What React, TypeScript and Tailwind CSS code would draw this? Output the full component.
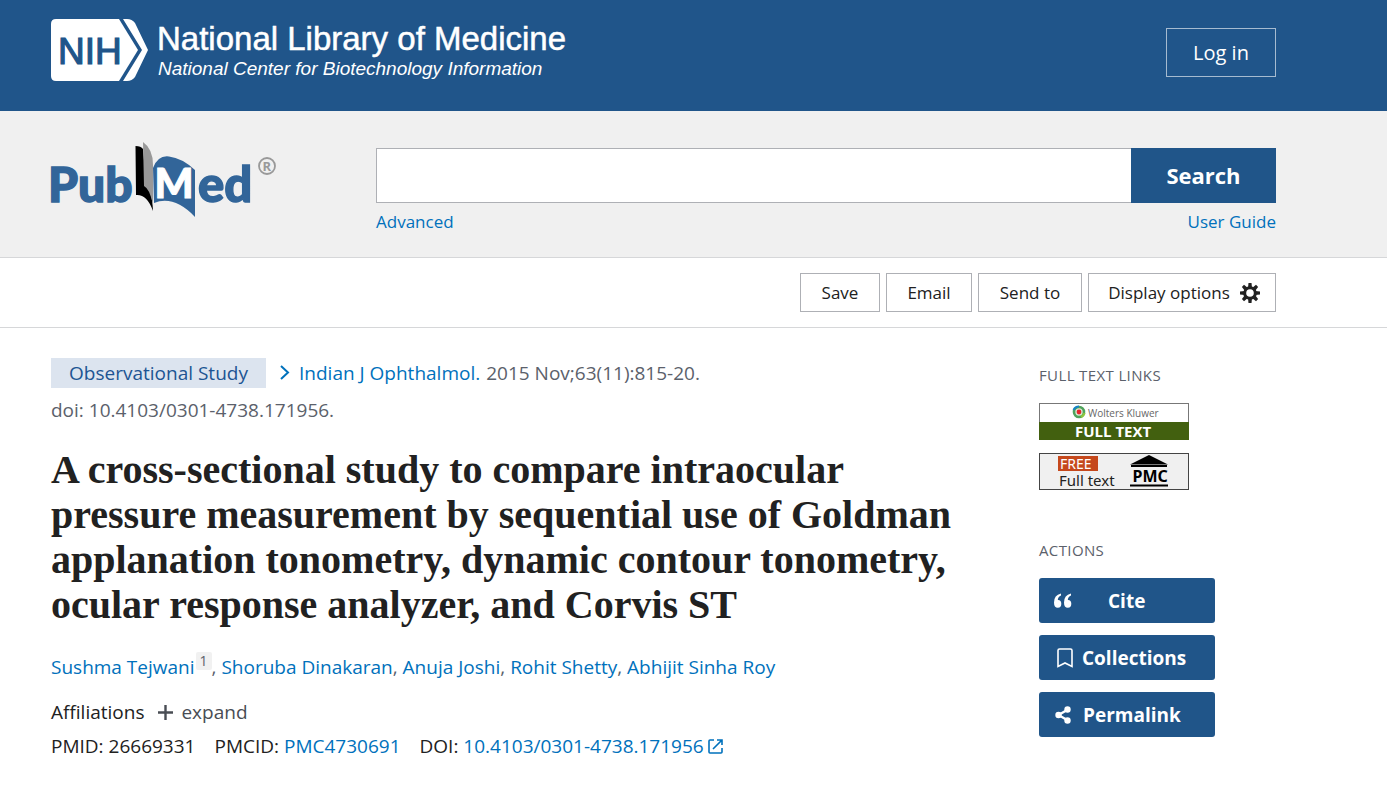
import React from 'react';

const link = 'text-[#0071bc] hover:underline';

function NihLogo() {
  return (
    <a href="#home" aria-label="National Library of Medicine" className="block">
      <svg width="540" height="64" viewBox="0 0 540 64" fontFamily="'Liberation Sans', Arial, sans-serif">
        <path d="M5 1H68L87 32L68 63H5Q0 63 0 58V6Q0 1 5 1Z" fill="#fff" />
        <path d="M72 1H76Q81 1 84 5L97 32L84 59Q81 63 76 63H72L91 32Z" fill="#fff" />
        <text x="7" y="46" fontSize="37" fill="#20558a" stroke="#20558a" strokeWidth="1.2">NIH</text>
        <text x="106" y="32" fontSize="33" fill="#fff" stroke="#fff" strokeWidth="0.5">National Library of Medicine</text>
        <text x="107" y="57" fontSize="19" fontStyle="italic" fill="#fff">National Center for Biotechnology Information</text>
      </svg>
    </a>
  );
}

function PubMedLogo() {
  return (
    <a href="#pubmed" aria-label="PubMed" className="-ml-2 block">
      <svg width="236" height="80" viewBox="-8 0 236 80" fontFamily="Lato, 'Open Sans', sans-serif" fontWeight="900">
        <text x="-3" y="61" fontSize="48" fill="#326599" stroke="#326599" strokeWidth="1.4">Pub</text>
        <text x="147" y="61" fontSize="49" fill="#326599" stroke="#326599" strokeWidth="1.4">ed</text>
        <path d="M84.500 5Q90 5 92 8L95 42Q101 49 102 70Q96 53 85 54Z" fill="#000" />
        <path d="M92 1Q102 8 102 24V64Q99 48 93 45Z" fill="#999" />
        <path d="M102 27Q107 14 118 15.500Q131 17 144 29V76Q123 54 103 62Z" fill="#326599" />
        <text x="103.500" y="57" fontSize="41" fill="#fff" stroke="#fff" strokeWidth="1">M</text>
        <circle cx="216" cy="25" r="8" fill="none" stroke="#999" strokeWidth="1.800" />
        <text x="211.500" y="30" fontSize="13" fontFamily="'Open Sans', sans-serif" fontWeight="700" fill="#999">R</text>
      </svg>
    </a>
  );
}

function Gear() {
  return (
    <svg width="20" height="20" viewBox="0 0 20 20" aria-hidden="true">
      <g fill="#212121">
        {[0, 45, 90, 135].map((a) => (
          <path key={a} d="M8.500 0H11.500L12 5V15L11.500 20H8.500L8 15V5Z" transform={`rotate(${a} 10 10)`} />
        ))}
        <circle cx="10" cy="10" r="6.800" />
      </g>
      <circle cx="10" cy="10" r="3.800" fill="#fff" />
    </svg>
  );
}

function WoltersBadge() {
  return (
    <svg width="150" height="37" viewBox="0 0 150 37" className="block" fontFamily="'Open Sans', sans-serif">
      <rect x="0.500" y="0.500" width="149" height="36" fill="#fff" stroke="#777" />
      <rect x="0" y="19" width="150" height="18" fill="#42600f" />
      <circle cx="40" cy="9" r="5" fill="#d9e8d0" stroke="#4fa35b" strokeWidth="2.600" />
      <path d="M34.500 7A6 6 0 0 1 40 3.500" fill="none" stroke="#1784c7" strokeWidth="2" />
      <path d="M42 14A6 6 0 0 0 45.500 10" fill="none" stroke="#8dc63f" strokeWidth="2.500" />
      <circle cx="40" cy="9" r="2.400" fill="#e4262c" />
      <text x="49" y="13.500" fontSize="10" fill="#666">Wolters Kluwer</text>
      <text x="36" y="33.500" fontSize="15" fontWeight="700" fill="#fff">FULL TEXT</text>
    </svg>
  );
}

function PmcBadge() {
  return (
    <svg width="150" height="37" viewBox="0 0 150 37" className="block" fontFamily="'Noto Sans', sans-serif">
      <rect x="0.500" y="0.500" width="149" height="36" fill="#f0f0f0" stroke="#444" />
      <rect x="19" y="3" width="40" height="15" fill="#c5481c" />
      <text x="21" y="16" fontSize="14" fill="#fff">FREE</text>
      <text x="20" y="33" fontSize="15" fill="#222">Full text</text>
      <path d="M110 2L129 11.500H91Z" fill="#000" />
      <path d="M92 13H128M91 32.500H129" stroke="#000" strokeWidth="2" />
      <text x="93.500" y="28.500" fontSize="16" fontWeight="700" fill="#000">PMC</text>
    </svg>
  );
}

function QuoteIcon() {
  return (
    <svg width="20" height="16" viewBox="0 0 20 16" fill="#fff" aria-hidden="true">
      <path d="M8 0.500V2.500Q5 3.500 4.800 7Q8.300 6.800 8.300 10.800Q8.300 14.800 4.800 14.800Q1 14.800 1 9.500Q1 2 8 0.500Z" />
      <path d="M18 0.500V2.500Q15 3.500 14.800 7Q18.300 6.800 18.300 10.800Q18.300 14.800 14.800 14.800Q11 14.800 11 9.500Q11 2 18 0.500Z" />
    </svg>
  );
}

function BookmarkIcon() {
  return (
    <svg width="16" height="20" viewBox="0 0 16 20" fill="none" stroke="#fff" strokeWidth="1.600" aria-hidden="true">
      <path d="M1 18.500V2.500Q1 1 2.500 1H13.500Q15 1 15 2.500V18.500L8 15Z" />
    </svg>
  );
}

function ShareIcon() {
  return (
    <svg width="18" height="18" viewBox="0 0 18 18" fill="#fff" aria-hidden="true">
      <path d="M13 3.500L3.500 9L13 14.500" fill="none" stroke="#fff" strokeWidth="2.400" />
      <circle cx="12.500" cy="3.500" r="3.200" />
      <circle cx="3.500" cy="9" r="3.200" />
      <circle cx="12.500" cy="14.500" r="3.200" />
    </svg>
  );
}

const toolButton =
  'flex h-[39px] items-center justify-center border border-[#aeb0b5] bg-white text-[17px] text-[#212121]';
const actionButton =
  'flex h-[45px] w-44 items-center rounded-[3px] bg-[#205589] pt-px text-[19px] font-bold text-white';

export default function App() {
  return (
    <div className="min-h-screen bg-white font-['Open_Sans','Noto_Sans',sans-serif] text-[#212121]">
      <header className="flex h-[111px] items-start justify-between bg-[#20558a] pr-[111px] pl-[51px]">
        <div className="pt-[18px]">
          <NihLogo />
        </div>
        <a
          href="#login"
          className="mt-7 flex h-[49px] w-[110px] items-center justify-center border border-[#a6bbd0] text-[20px] text-white"
        >
          Log in
        </a>
      </header>

      <section className="flex h-[147px] border-b border-[#d6d7d9] bg-[#f0f0f0] pr-[111px] pl-[51px]">
        <div className="w-[325px] shrink-0 pt-[30px]">
          <PubMedLogo />
        </div>
        <form className="flex-1 pt-[37px]" onSubmit={(e) => e.preventDefault()}>
          <div className="flex h-[55px]">
            <input
              type="text"
              aria-label="Search PubMed"
              className="min-w-0 flex-1 border border-r-0 border-[#aeb0b5] bg-white px-3 text-[20px] outline-none"
            />
            <button type="submit" className="w-[145px] bg-[#205589] text-[22px] font-bold text-white">
              Search
            </button>
          </div>
          <div className="flex justify-between pt-[7px] text-[17px] leading-6">
            <a href="#advanced" className={link}>Advanced</a>
            <a href="#guide" className={link}>User Guide</a>
          </div>
        </form>
      </section>

      <div className="flex h-[70px] items-start justify-end gap-[6px] border-b border-[#d6d7d9] pt-[15px] pr-[111px] pl-[51px]">
        <button type="button" className={`${toolButton} w-20`}>Save</button>
        <button type="button" className={`${toolButton} w-[86px]`}>Email</button>
        <button type="button" className={`${toolButton} w-[104px]`}>Send to</button>
        <button type="button" className={`${toolButton} w-[188px] gap-[10px] pl-1`}>
          Display options
          <Gear />
        </button>
      </div>

      <div className="flex items-start pr-[111px] pl-[51px]">
        <main className="min-w-0 flex-1 pt-[30px]">
          <div className="flex h-[30px] items-center text-[19px] text-[#5b616b]">
            <span className="mr-3 flex h-[30px] w-[215px] items-center justify-center bg-[#dce4ef] text-[#205493]">
              Observational Study
            </span>
            <svg width="14" height="18" viewBox="0 0 14 18" fill="none" stroke="#0071bc" strokeWidth="2" aria-hidden="true">
              <path d="M3 2L10 8.500L3 15" />
            </svg>
            <a href="#journal" className={`${link} mr-[6px] ml-[7px]`}>Indian J Ophthalmol.</a>
            <span>2015 Nov;63(11):815-20.</span>
          </div>
          <div className="pt-2 text-[19px] leading-7 text-[#5b616b]">doi: 10.4103/0301-4738.171956.</div>

          <h1 className="pt-[23px] font-['Liberation_Serif',serif] text-[40px] leading-[45px] font-bold whitespace-nowrap">
            A cross-sectional study to compare intraocular
            <br />
            pressure measurement by sequential use of Goldman
            <br />
            applanation tonometry, dynamic contour tonometry,
            <br />
            ocular response analyzer, and Corvis ST
          </h1>

          <div className="pt-[25px] text-[19px] leading-[30px] whitespace-nowrap text-[#5b616b]">
            <a href="#a1" className={link}>Sushma Tejwani</a>
            <sup className="-top-2 ml-px inline-block rounded-[2px] bg-[#f1f1f1] px-1 text-[14px] leading-[18px]">
              <a href="#aff1" className="text-[#5b616b]">1</a>
            </sup>
            , <a href="#a2" className={link}>Shoruba Dinakaran</a>, <a href="#a3" className={link}>Anuja Joshi</a>,{' '}
            <a href="#a4" className={link}>Rohit Shetty</a>, <a href="#a5" className={link}>Abhijit Sinha Roy</a>
          </div>

          <div className="flex items-center pt-[13px] text-[19px] leading-[34px]">
            <span className="mr-[14px]">Affiliations</span>
            <button type="button" className="flex items-center gap-2 text-[#494d54]">
              <svg width="15" height="15" viewBox="0 0 15 15" stroke="#494d54" strokeWidth="2.400" aria-hidden="true">
                <path d="M7.500 0V15M0 7.500H15" />
              </svg>
              expand
            </button>
          </div>
          <div className="flex gap-[19px] text-[19px] leading-[34px] whitespace-nowrap">
            <span>PMID: 26669331</span>
            <span>PMCID: <a href="#pmc" className={link}>PMC4730691</a></span>
            <span className="flex items-center gap-1">
              <span>DOI: <a href="#doi" className={link}>10.4103/0301-4738.171956</a></span>
              <svg width="15" height="15" viewBox="0 0 15 15" fill="none" stroke="#0071bc" strokeWidth="1.600" aria-hidden="true">
                <path d="M6 1H2Q1 1 1 2V13Q1 14 2 14H13Q14 14 14 13V9M9 1H14V6M14 1L5 10" />
              </svg>
            </span>
          </div>
        </main>

        <aside className="w-[237px] shrink-0 pt-9">
          <h2 className="text-[15px] leading-[22px] tracking-wide text-[#5b616b]">FULL TEXT LINKS</h2>
          <div className="flex flex-col items-start gap-[13px] pt-[17px]">
            <a href="#wk" aria-label="Wolters Kluwer full text"><WoltersBadge /></a>
            <a href="#pmcft" aria-label="Free full text at PMC"><PmcBadge /></a>
          </div>
          <h2 className="pt-[49px] text-[15px] leading-[22px] tracking-wide text-[#5b616b]">ACTIONS</h2>
          <div className="flex flex-col gap-3 pt-[17px]">
            <button type="button" className={`${actionButton} gap-[35px] pl-[14px]`}>
              <QuoteIcon />
              Cite
            </button>
            <button type="button" className={`${actionButton} gap-[9px] pl-[18px]`}>
              <BookmarkIcon />
              Collections
            </button>
            <button type="button" className={`${actionButton} gap-[10px] pl-4`}>
              <ShareIcon />
              Permalink
            </button>
          </div>
        </aside>
      </div>
    </div>
  );
}
